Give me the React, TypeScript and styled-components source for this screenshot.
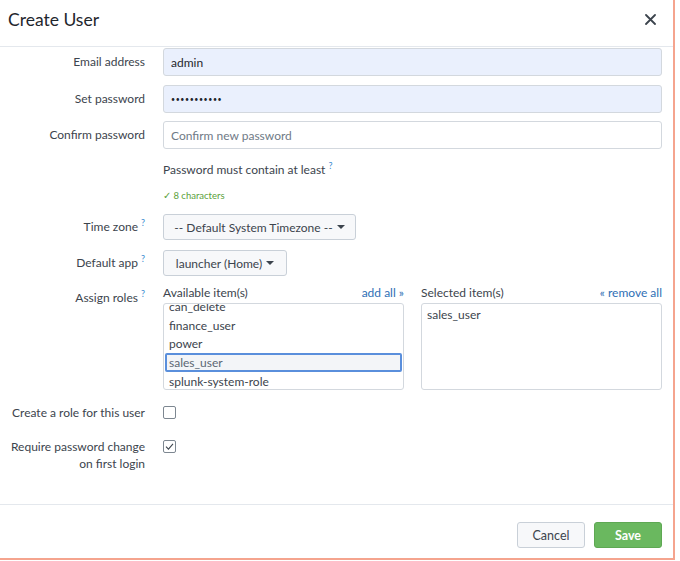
import styled, { createGlobalStyle } from "styled-components";

const GlobalStyle = createGlobalStyle`
  html, body {
    margin: 0;
    padding: 0;
    background: #ffffff;
  }
  body {
    font-family: "Lato", "Open Sans", sans-serif;
    color: #3c444d;
  }
  * {
    box-sizing: border-box;
  }
`;

const Modal = styled.div`
  width: 675px;
  height: 560px;
  display: flex;
  flex-direction: column;
  background: #ffffff;
  border-right: 2px solid #f5a48e;
  border-bottom: 2px solid #f5a48e;
`;

const Header = styled.div`
  height: 47px;
  flex: none;
  display: flex;
  align-items: center;
  justify-content: space-between;
  padding: 0 16px 8px 8px;
  border-bottom: 1px solid #e4e8ed;
`;

const Title = styled.h1`
  margin: 0;
  font-size: 17.5px;
  font-weight: 400;
  color: #1f262d;
`;

const Close = styled.button`
  border: 0;
  background: none;
  padding: 0;
  width: 14px;
  height: 14px;
  display: flex;
  align-items: center;
  justify-content: center;
  cursor: pointer;
`;

const Body = styled.div`
  flex: 1;
  padding: 1px 11px 0 0;
`;

const Row = styled.div<{ $mb: number }>`
  display: grid;
  grid-template-columns: 145px 1fr;
  column-gap: 18px;
  align-items: start;
  margin-bottom: ${(p) => p.$mb}px;
`;

const Label = styled.div<{ $pt?: number }>`
  text-align: right;
  font-size: 12px;
  line-height: 17px;
  white-space: nowrap;
  padding-top: ${(p) => p.$pt ?? 5}px;
  color: #3c444d;
`;

const Help = styled.sup`
  color: #3a8bd0;
  font-size: 9px;
  margin-left: 3px;
  vertical-align: 5px;
  line-height: 0;
`;

const TextInput = styled.input<{ $filled?: boolean }>`
  width: 100%;
  height: 28px;
  padding: 0 7px;
  border: 1px solid #d3d8de;
  border-radius: 3px;
  background: ${(p) => (p.$filled ? "#eaf0fd" : "#ffffff")};
  font-family: inherit;
  font-size: 12px;
  color: #1f262d;
  outline: none;
  &::placeholder {
    color: #6f7a86;
  }
`;

const PasswordInput = styled(TextInput)`
  font-size: 7px;
  letter-spacing: 0.6px;
`;

const Hint = styled.div`
  font-size: 12px;
  line-height: 17px;
  color: #3c444d;
`;

const HintCheck = styled.div`
  margin-top: 12px;
  font-size: 9.5px;
  line-height: 12px;
  color: #5ba13a;
`;

const SelectButton = styled.button<{ $w: number }>`
  width: ${(p) => p.$w}px;
  height: 26px;
  display: flex;
  align-items: center;
  justify-content: center;
  gap: 4px;
  border: 1px solid #c9d0d8;
  border-radius: 3px;
  background: #f7f8fa;
  font-family: inherit;
  font-size: 12px;
  color: #3c444d;
  padding: 0;
`;

const Caret = styled.span`
  display: inline-block;
  width: 0;
  height: 0;
  border-left: 4px solid transparent;
  border-right: 4px solid transparent;
  border-top: 4px solid #3c444d;
`;

const Accumulator = styled.div`
  display: grid;
  grid-template-columns: 1fr 1fr;
  column-gap: 17px;
`;

const ListColumn = styled.div`
  display: flex;
  flex-direction: column;
`;

const ListHead = styled.div`
  display: flex;
  justify-content: space-between;
  align-items: baseline;
  font-size: 12px;
  line-height: 16px;
  margin-bottom: 2px;
`;

const Link = styled.a`
  color: #2f6fb5;
  text-decoration: none;
  cursor: pointer;
`;

const ListBox = styled.div`
  height: 87px;
  border: 1px solid #d3d8de;
  border-radius: 3px;
  overflow: hidden;
  padding: 0 1px;
`;

const ListInner = styled.div<{ $offset: number }>`
  margin-top: ${(p) => p.$offset}px;
`;

const Item = styled.div<{ $focus?: boolean }>`
  height: 18.7px;
  padding: 0 0 0 2px;
  font-size: 12px;
  color: ${(p) => (p.$focus ? "#5c6773" : "#3c444d")};
  border: 2px solid ${(p) => (p.$focus ? "#5a8fdc" : "transparent")};
  border-radius: 2px;
  background: ${(p) => (p.$focus ? "#f3f5f8" : "transparent")};
  display: flex;
  align-items: center;
`;

const Checkbox = styled.span<{ $mt: number }>`
  width: 13px;
  height: 13px;
  margin-top: ${(p) => p.$mt}px;
  border: 1px solid #7d8791;
  border-radius: 2px;
  display: flex;
  align-items: center;
  justify-content: center;
  background: #ffffff;
`;

const Footer = styled.div`
  height: 54px;
  flex: none;
  border-top: 1px solid #e4e8ed;
  display: flex;
  justify-content: flex-end;
  align-items: flex-start;
  gap: 9px;
  padding: 17px 11px 0 0;
`;

const Button = styled.button<{ $primary?: boolean }>`
  height: 26px;
  min-width: 68px;
  padding: 0 12px;
  border-radius: 3px;
  font-family: inherit;
  font-size: 12.5px;
  font-weight: ${(p) => (p.$primary ? 700 : 400)};
  color: ${(p) => (p.$primary ? "#ffffff" : "#3c444d")};
  background: ${(p) => (p.$primary ? "#6ab85f" : "#f7f8fa")};
  border: 1px solid ${(p) => (p.$primary ? "#5ea853" : "#c9d0d8")};
  cursor: pointer;
`;

const available = ["can_delete", "finance_user", "power", "sales_user", "splunk-system-role"];

export default function App() {
  return (
    <>
      <GlobalStyle />
      <Modal>
        <Header>
          <Title>Create User</Title>
          <Close aria-label="Close">
            <svg width="11" height="11" viewBox="0 0 11 11">
              <path d="M1 1L10 10M10 1L1 10" stroke="#3c444d" strokeWidth="1.8" strokeLinecap="round" />
            </svg>
          </Close>
        </Header>
        <Body>
          <Row $mb={9}>
            <Label>Email address</Label>
            <TextInput $filled defaultValue="admin" />
          </Row>
          <Row $mb={8}>
            <Label>Set password</Label>
            <PasswordInput $filled type="password" defaultValue="sup3rsecret" />
          </Row>
          <Row $mb={12}>
            <Label>Confirm password</Label>
            <TextInput placeholder="Confirm new password" />
          </Row>
          <Row $mb={12}>
            <div />
            <div>
              <Hint>
                Password must contain at least<Help>?</Help>
              </Hint>
              <HintCheck>✓ 8 characters</HintCheck>
            </div>
          </Row>
          <Row $mb={10}>
            <Label $pt={4}>
              Time zone<Help>?</Help>
            </Label>
            <SelectButton $w={193}>
              -- Default System Timezone -- <Caret />
            </SelectButton>
          </Row>
          <Row $mb={9}>
            <Label $pt={4}>
              Default app<Help>?</Help>
            </Label>
            <SelectButton $w={124}>
              launcher (Home) <Caret />
            </SelectButton>
          </Row>
          <Row $mb={12}>
            <Label $pt={4}>
              Assign roles<Help>?</Help>
            </Label>
            <Accumulator>
              <ListColumn>
                <ListHead>
                  <span>Available item(s)</span>
                  <Link>add all »</Link>
                </ListHead>
                <ListBox>
                  <ListInner $offset={-7}>
                    {available.map((name) => (
                      <Item key={name} $focus={name === "sales_user"}>
                        {name}
                      </Item>
                    ))}
                  </ListInner>
                </ListBox>
              </ListColumn>
              <ListColumn>
                <ListHead>
                  <span>Selected item(s)</span>
                  <Link>« remove all</Link>
                </ListHead>
                <ListBox>
                  <ListInner $offset={1}>
                    <Item>sales_user</Item>
                  </ListInner>
                </ListBox>
              </ListColumn>
            </Accumulator>
          </Row>
          <Row $mb={17}>
            <Label $pt={2}>Create a role for this user</Label>
            <Checkbox $mt={4} />
          </Row>
          <Row $mb={0}>
            <Label $pt={0}>
              Require password change
              <br />
              on first login
            </Label>
            <Checkbox $mt={2}>
              <svg width="9" height="7" viewBox="0 0 10 8">
                <path d="M1 4.2L3.8 7L9 1" fill="none" stroke="#3c444d" strokeWidth="1.2" />
              </svg>
            </Checkbox>
          </Row>
        </Body>
        <Footer>
          <Button>Cancel</Button>
          <Button $primary>Save</Button>
        </Footer>
      </Modal>
    </>
  );
}
